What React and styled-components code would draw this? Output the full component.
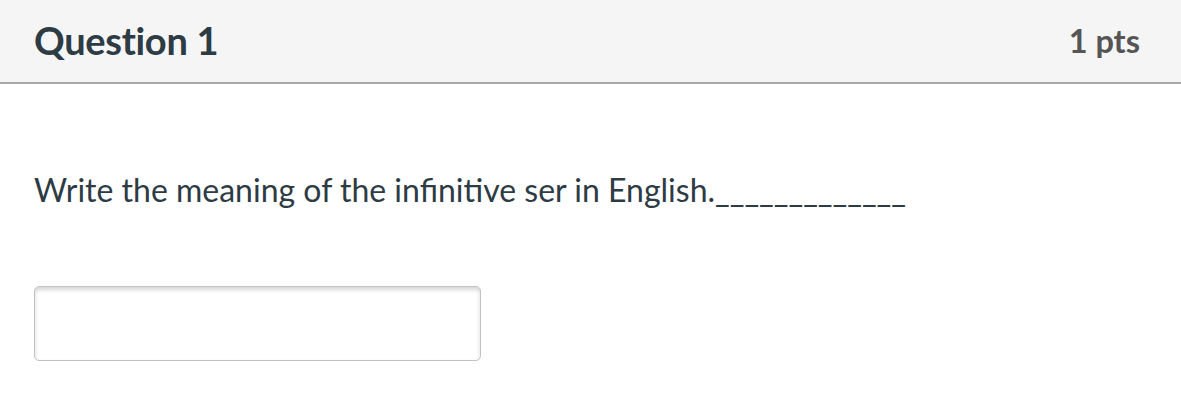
import React from "react";
import styled, { createGlobalStyle } from "styled-components";

const GlobalStyle = createGlobalStyle`
  html, body {
    margin: 0;
    padding: 0;
    background: #ffffff;
  }
  body {
    font-family: Lato, "Liberation Sans", sans-serif;
  }
`;

const Page = styled.div`
  width: 1181px;
  height: 415px;
  background: #ffffff;
  overflow: hidden;
`;

const Header = styled.div`
  display: flex;
  align-items: center;
  justify-content: space-between;
  height: 84px;
  padding: 0 41px 2px 34px;
  box-sizing: border-box;
  background: #f5f5f5;
  border-bottom: 2px solid #a8a8a8;
`;

const Title = styled.h2`
  margin: 0;
  font-size: 38px;
  font-weight: 700;
  color: #2d3b45;
  letter-spacing: -0.3px;
`;

const Points = styled.div`
  font-size: 32.5px;
  font-weight: 700;
  color: #555555;
`;

const Body = styled.div`
  display: flex;
  flex-direction: column;
  align-items: flex-start;
  padding: 86px 34px 0;
  gap: 76px;
`;

const Prompt = styled.p`
  margin: 0;
  font-size: 32px;
  color: #2d3b45;
  line-height: 40px;
`;

const Answer = styled.input`
  width: 447px;
  height: 75px;
  box-sizing: border-box;
  border: 1.5px solid #c2c2c2;
  border-radius: 5px;
  background: #ffffff;
  box-shadow: inset 0 3px 4px rgba(0, 0, 0, 0.16);
  font-family: inherit;
  font-size: 28px;
  padding: 0 12px;
  outline: none;
`;

export default function App() {
  return (
    <Page>
      <GlobalStyle />
      <Header>
        <Title>Question 1</Title>
        <Points>1 pts</Points>
      </Header>
      <Body>
        <Prompt>Write the meaning of the infinitive ser in English._____________</Prompt>
        <Answer type="text" />
      </Body>
    </Page>
  );
}
